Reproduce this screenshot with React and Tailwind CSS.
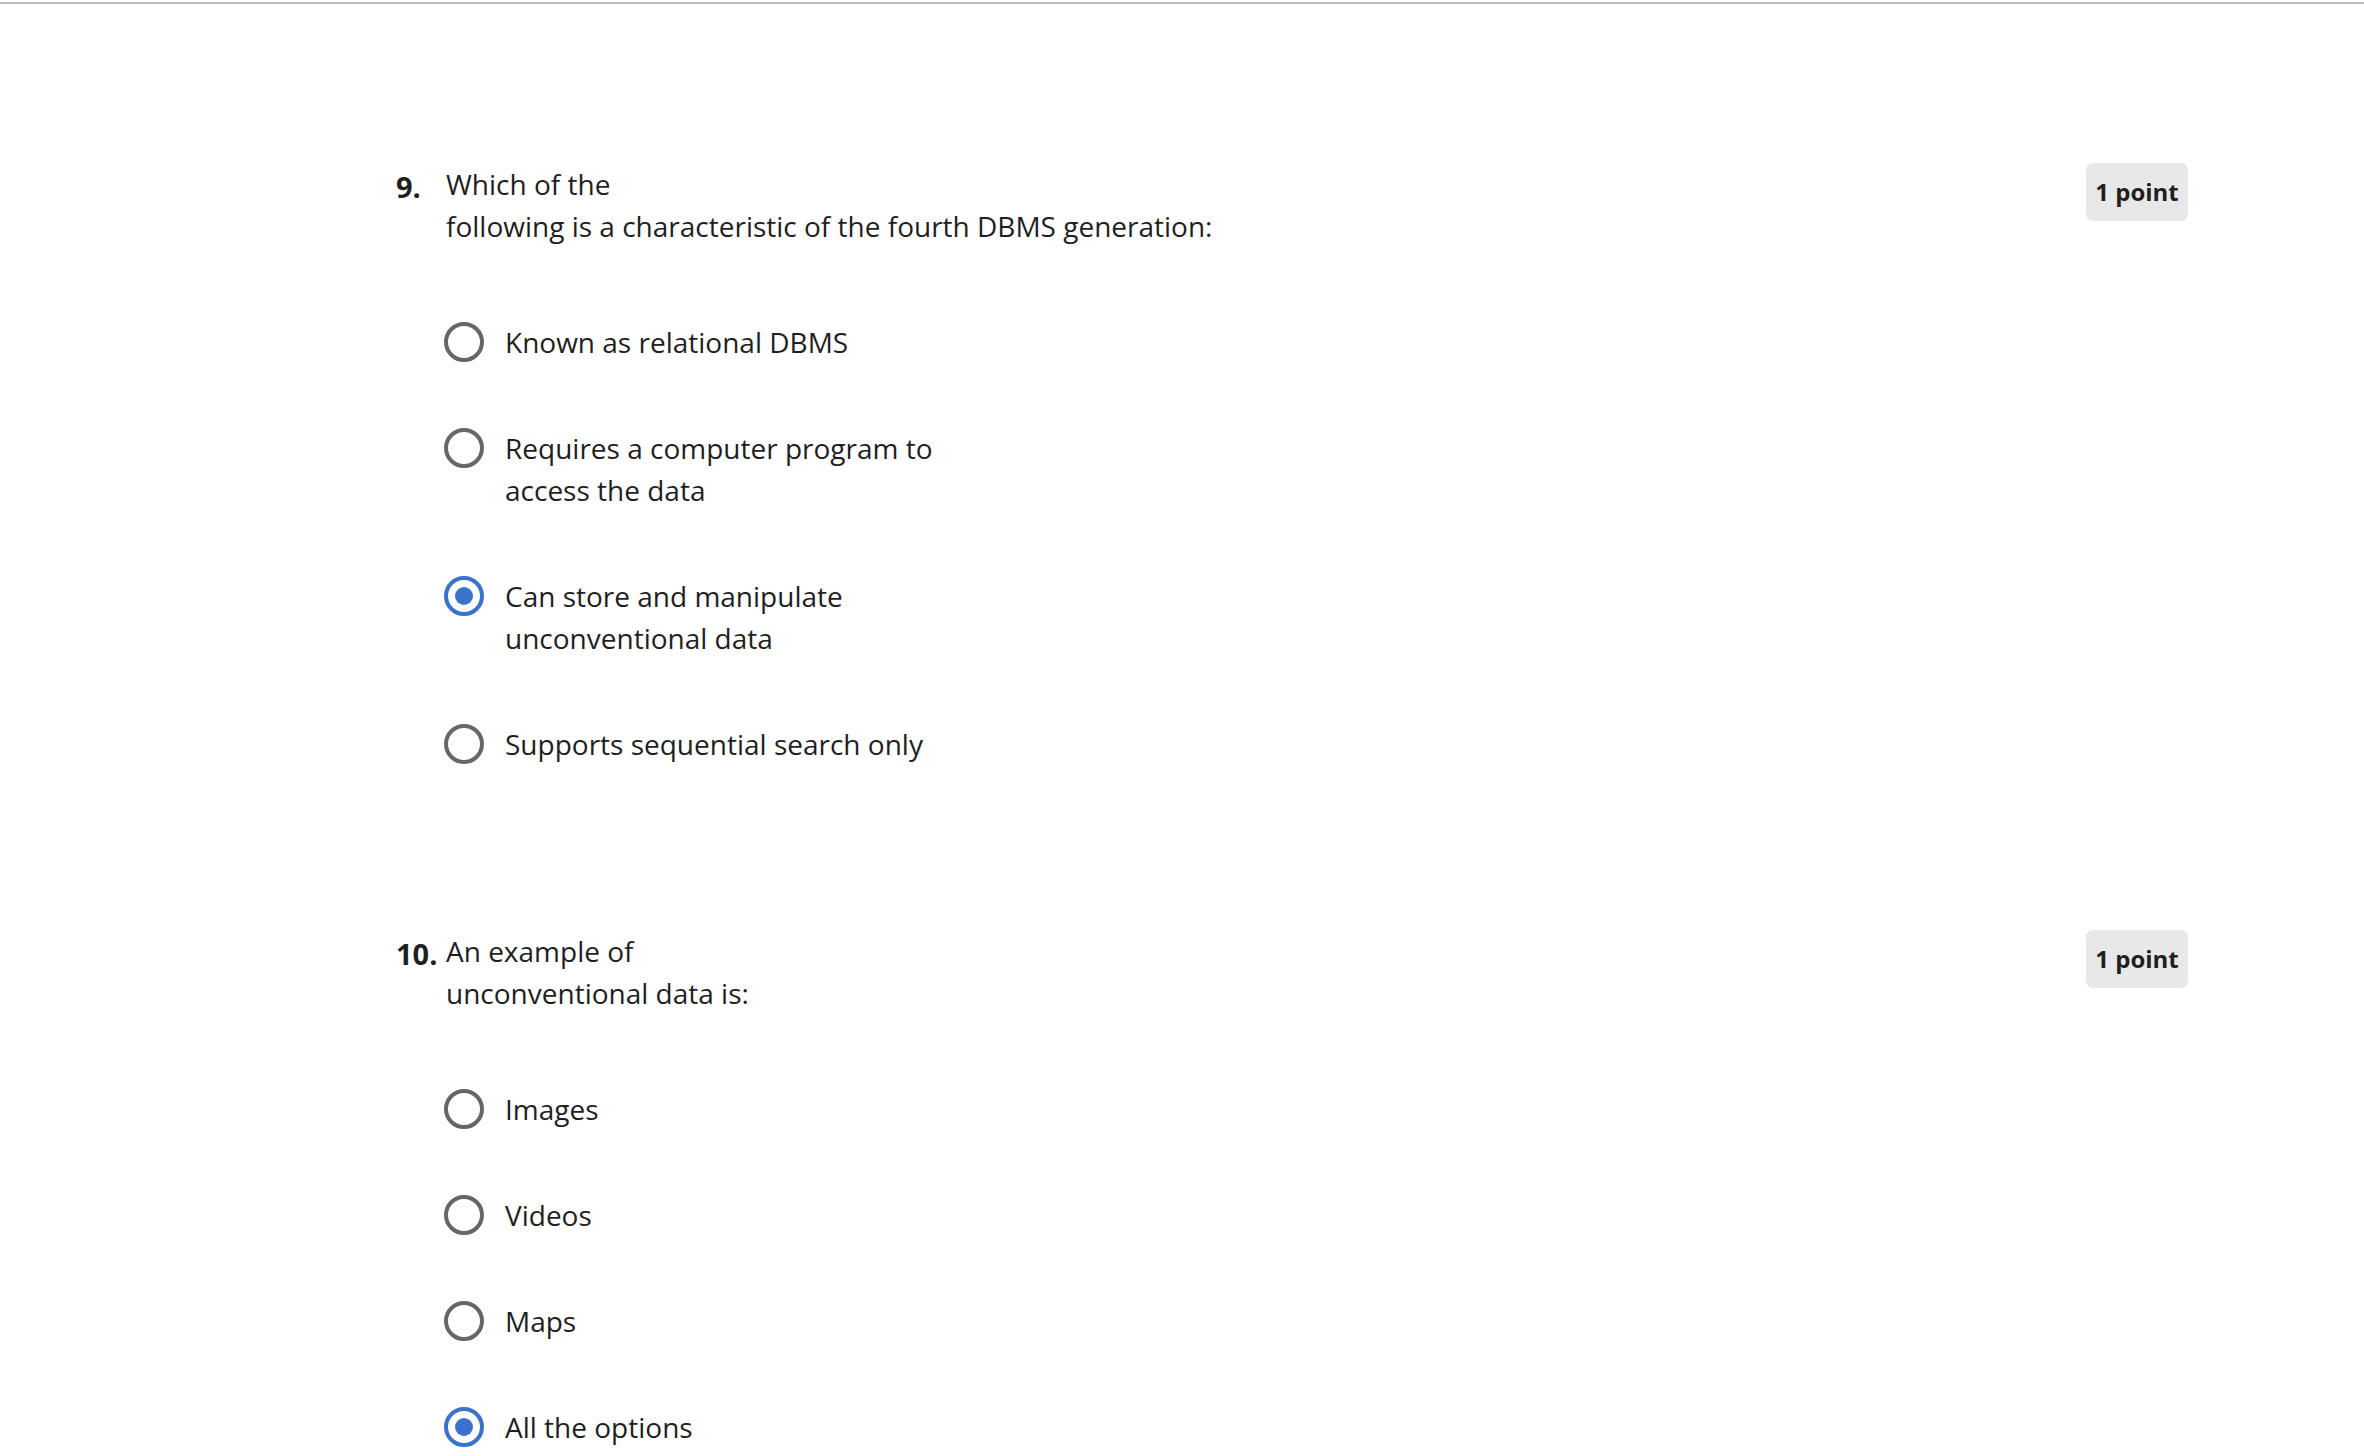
import React from "react";

const font = { fontFamily: '"Open Sans", "Noto Sans", "Liberation Sans", sans-serif' };

function Radio({ checked }) {
  if (checked) {
    return (
      <span className="flex h-[40px] w-[40px] shrink-0 items-center justify-center rounded-full border-[4px] border-[#3b73cc]">
        <span className="h-[18px] w-[18px] rounded-full bg-[#3b73cc]" />
      </span>
    );
  }
  return <span className="block h-[40px] w-[40px] shrink-0 rounded-full border-[4px] border-[#666666]" />;
}

function Option({ lines, checked }) {
  return (
    <div className="flex items-start">
      <div className="flex h-[42px] items-center">
        <Radio checked={checked} />
      </div>
      <div className="ml-[21px] text-[28px] leading-[42px] text-[#1f1f1f]">
        {lines.map((l, i) => (
          <div key={i}>{l}</div>
        ))}
      </div>
    </div>
  );
}

function Question({ num, lines, options }) {
  return (
    <div>
      <div className="flex items-start">
        <div className="mt-[3px] w-[50px] shrink-0 text-[29px] font-bold leading-[42px] text-[#1f1f1f]">{num}.</div>
        <div className="flex-1 text-[28px] leading-[42px] text-[#1f1f1f]">
          {lines.map((l, i) => (
            <div key={i}>{l}</div>
          ))}
        </div>
        <div className="flex h-[58px] w-[102px] items-center justify-center rounded-[7px] bg-[#e8e8e8] text-[24px] font-bold text-[#1f1f1f]">
          1 point
        </div>
      </div>
      <div className="ml-[48px] mt-[74px] flex flex-col gap-[64px]">
        {options.map((o, i) => (
          <Option key={i} lines={o.lines} checked={o.checked} />
        ))}
      </div>
    </div>
  );
}

export default function App() {
  return (
    <div className="min-h-[1456px] w-full bg-white" style={font}>
      <div className="pt-[2px]">
        <div className="h-[2px] w-full bg-[#bdbdbd]" />
      </div>
      <div className="ml-[396px] w-[1792px] pt-[159px]">
        <Question
          num="9"
          lines={["Which of the", "following is a characteristic of the fourth DBMS generation:"]}
          options={[
            { lines: ["Known as relational DBMS"] },
            { lines: ["Requires a computer program to", "access the data"] },
            { lines: ["Can store and manipulate", "unconventional data"], checked: true },
            { lines: ["Supports sequential search only"] },
          ]}
        />
        <div className="h-[165px]" />
        <Question
          num="10"
          lines={["An example of", "unconventional data is:"]}
          options={[
            { lines: ["Images"] },
            { lines: ["Videos"] },
            { lines: ["Maps"] },
            { lines: ["All the options"], checked: true },
          ]}
        />
      </div>
    </div>
  );
}
